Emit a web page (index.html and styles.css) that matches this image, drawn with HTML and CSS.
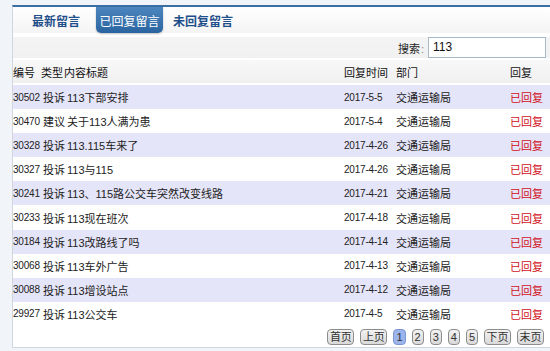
FILE: index.html
```html
<!DOCTYPE html>
<html lang="zh-CN">
<head>
<meta charset="utf-8">
<link rel="stylesheet" href="styles.css">
</head>
<body>
<div class="panel">
  <div class="tabs">
    <span class="tab tab-first">最新留言</span>
    <span class="tab active">已回复留言</span>
    <span class="tab tab-last">未回复留言</span>
  </div>
  <div class="search">
    <span class="search-label">搜索<span class="colon">:</span></span>
    <div class="search-input">113</div>
  </div>
  <div class="grid head">
    <span>编号</span><span>类型</span><span>内容标题</span><span>回复时间</span><span>部门</span><span>回复</span>
  </div>
  <div class="rows">
    <div class="grid row alt"><span class="num">30502</span><span class="type">投诉</span><span class="title">113下部安排</span><span class="num">2017-5-5</span><span>交通运输局</span><span class="red">已回复</span></div>
    <div class="grid row"><span class="num">30470</span><span class="type">建议</span><span class="title">关于113人满为患</span><span class="num">2017-5-4</span><span>交通运输局</span><span class="red">已回复</span></div>
    <div class="grid row alt"><span class="num">30328</span><span class="type">投诉</span><span class="title">113.115车来了</span><span class="num">2017-4-26</span><span>交通运输局</span><span class="red">已回复</span></div>
    <div class="grid row"><span class="num">30327</span><span class="type">投诉</span><span class="title">113与115</span><span class="num">2017-4-26</span><span>交通运输局</span><span class="red">已回复</span></div>
    <div class="grid row alt"><span class="num">30241</span><span class="type">投诉</span><span class="title">113、115路公交车突然改变线路</span><span class="num">2017-4-21</span><span>交通运输局</span><span class="red">已回复</span></div>
    <div class="grid row"><span class="num">30233</span><span class="type">投诉</span><span class="title">113现在班次</span><span class="num">2017-4-18</span><span>交通运输局</span><span class="red">已回复</span></div>
    <div class="grid row alt"><span class="num">30184</span><span class="type">投诉</span><span class="title">113改路线了吗</span><span class="num">2017-4-14</span><span>交通运输局</span><span class="red">已回复</span></div>
    <div class="grid row"><span class="num">30068</span><span class="type">投诉</span><span class="title">113车外广告</span><span class="num">2017-4-13</span><span>交通运输局</span><span class="red">已回复</span></div>
    <div class="grid row alt"><span class="num">30088</span><span class="type">投诉</span><span class="title">113增设站点</span><span class="num">2017-4-12</span><span>交通运输局</span><span class="red">已回复</span></div>
    <div class="grid row"><span class="num">29927</span><span class="type">投诉</span><span class="title">113公交车</span><span class="num">2017-4-5</span><span>交通运输局</span><span class="red">已回复</span></div>
  </div>
  <div class="pager">
    <span class="btn wide">首页</span>
    <span class="btn wide">上页</span>
    <span class="btn cur">1</span>
    <span class="btn">2</span>
    <span class="btn">3</span>
    <span class="btn">4</span>
    <span class="btn">5</span>
    <span class="btn wide">下页</span>
    <span class="btn wide">末页</span>
  </div>
</div>
</body>
</html>
```

FILE: styles.css
```css
html, body {
  margin: 0;
  padding: 0;
}
body {
  width: 550px;
  height: 351px;
  overflow: hidden;
  background: #f1f5f9;
  font-family: "Liberation Sans", "Noto Sans CJK SC", sans-serif;
  font-size: 11px;
  color: #222;
}
.panel {
  margin: 5px 0 0 12px;
  width: 538px;
  height: 343px;
  box-sizing: border-box;
  background: #fff;
  border-top: 2px solid #3b6fa3;
  border-left: 1px solid #cfd6dc;
  border-bottom: 1px solid #cfd6dc;
  display: flex;
  flex-direction: column;
}
.tabs {
  height: 26px;
  display: flex;
  align-items: stretch;
  background: linear-gradient(#ffffff, #f4f4f4);
}
.tab {
  display: flex;
  align-items: center;
  padding: 0 4px;
  font-size: 12px;
  font-weight: bold;
  color: #1f4f8a;
  font-family: "Noto Sans CJK SC", sans-serif;
}
.tab-first {
  margin-left: 15px;
}
.active {
  margin-left: 12px;
  width: 67px;
  box-sizing: border-box;
  justify-content: center;
  padding: 0;
  color: #fff;
  font-weight: normal;
  background: linear-gradient(#4d86bf, #2a64a0);
  border-radius: 0 0 5px 5px;
  box-shadow: 0 1px 2px rgba(0,0,0,0.25);
}
.tab-last {
  margin-left: 6px;
}
.search {
  height: 21px;
  margin-top: 4px;
  display: flex;
  justify-content: flex-end;
  align-items: center;
  padding-right: 4px;
  background: linear-gradient(#f4f4f4, #f1f1f1);
}
.search-label {
  margin-right: 4px;
}
.colon {
  color: #888;
  margin-left: 1px;
}
.search-input {
  width: 118px;
  height: 21px;
  box-sizing: border-box;
  border: 1px solid #a9b8c6;
  background: #fff;
  padding: 0 4px;
  line-height: 19px;
  font-size: 12px;
  color: #111;
}
.grid {
  display: grid;
  grid-template-columns: 28px 23px 280px 52px 114px 1fr;
  align-items: center;
  white-space: nowrap;
}
.head {
  height: 23px;
  margin-top: 2px;
  background: linear-gradient(#f8f8f8, #f0f0f0);
  color: #111;
  margin-bottom: 2px;
}
.rows {
  display: flex;
  flex-direction: column;
}
.row {
  height: 24.1px;
  color: #222;
}
.alt {
  background: #e5e5f9;
}
.num {
  font-size: 10px;
  letter-spacing: -0.2px;
}
.type {
  padding-left: 2px;
}
.title {
  padding-left: 3px;
}
.red {
  color: #d0101a;
}
.pager {
  display: flex;
  justify-content: flex-end;
  align-items: center;
  gap: 6px;
  padding-right: 6px;
  margin-top: 3px;
  height: 17px;
}
.btn {
  height: 16px;
  min-width: 12px;
  box-sizing: border-box;
  padding: 0 2px;
  border: 1px solid #8d8d8d;
  border-radius: 4px;
  background: linear-gradient(#f2f2f2, #d9d9d9);
  font-size: 11px;
  line-height: 14px;
  text-align: center;
  color: #333;
}
.wide {
  width: 27px;
  padding: 0;
}
.cur {
  background: #9cb4ec;
  border-color: #7d97d2;
}
```
